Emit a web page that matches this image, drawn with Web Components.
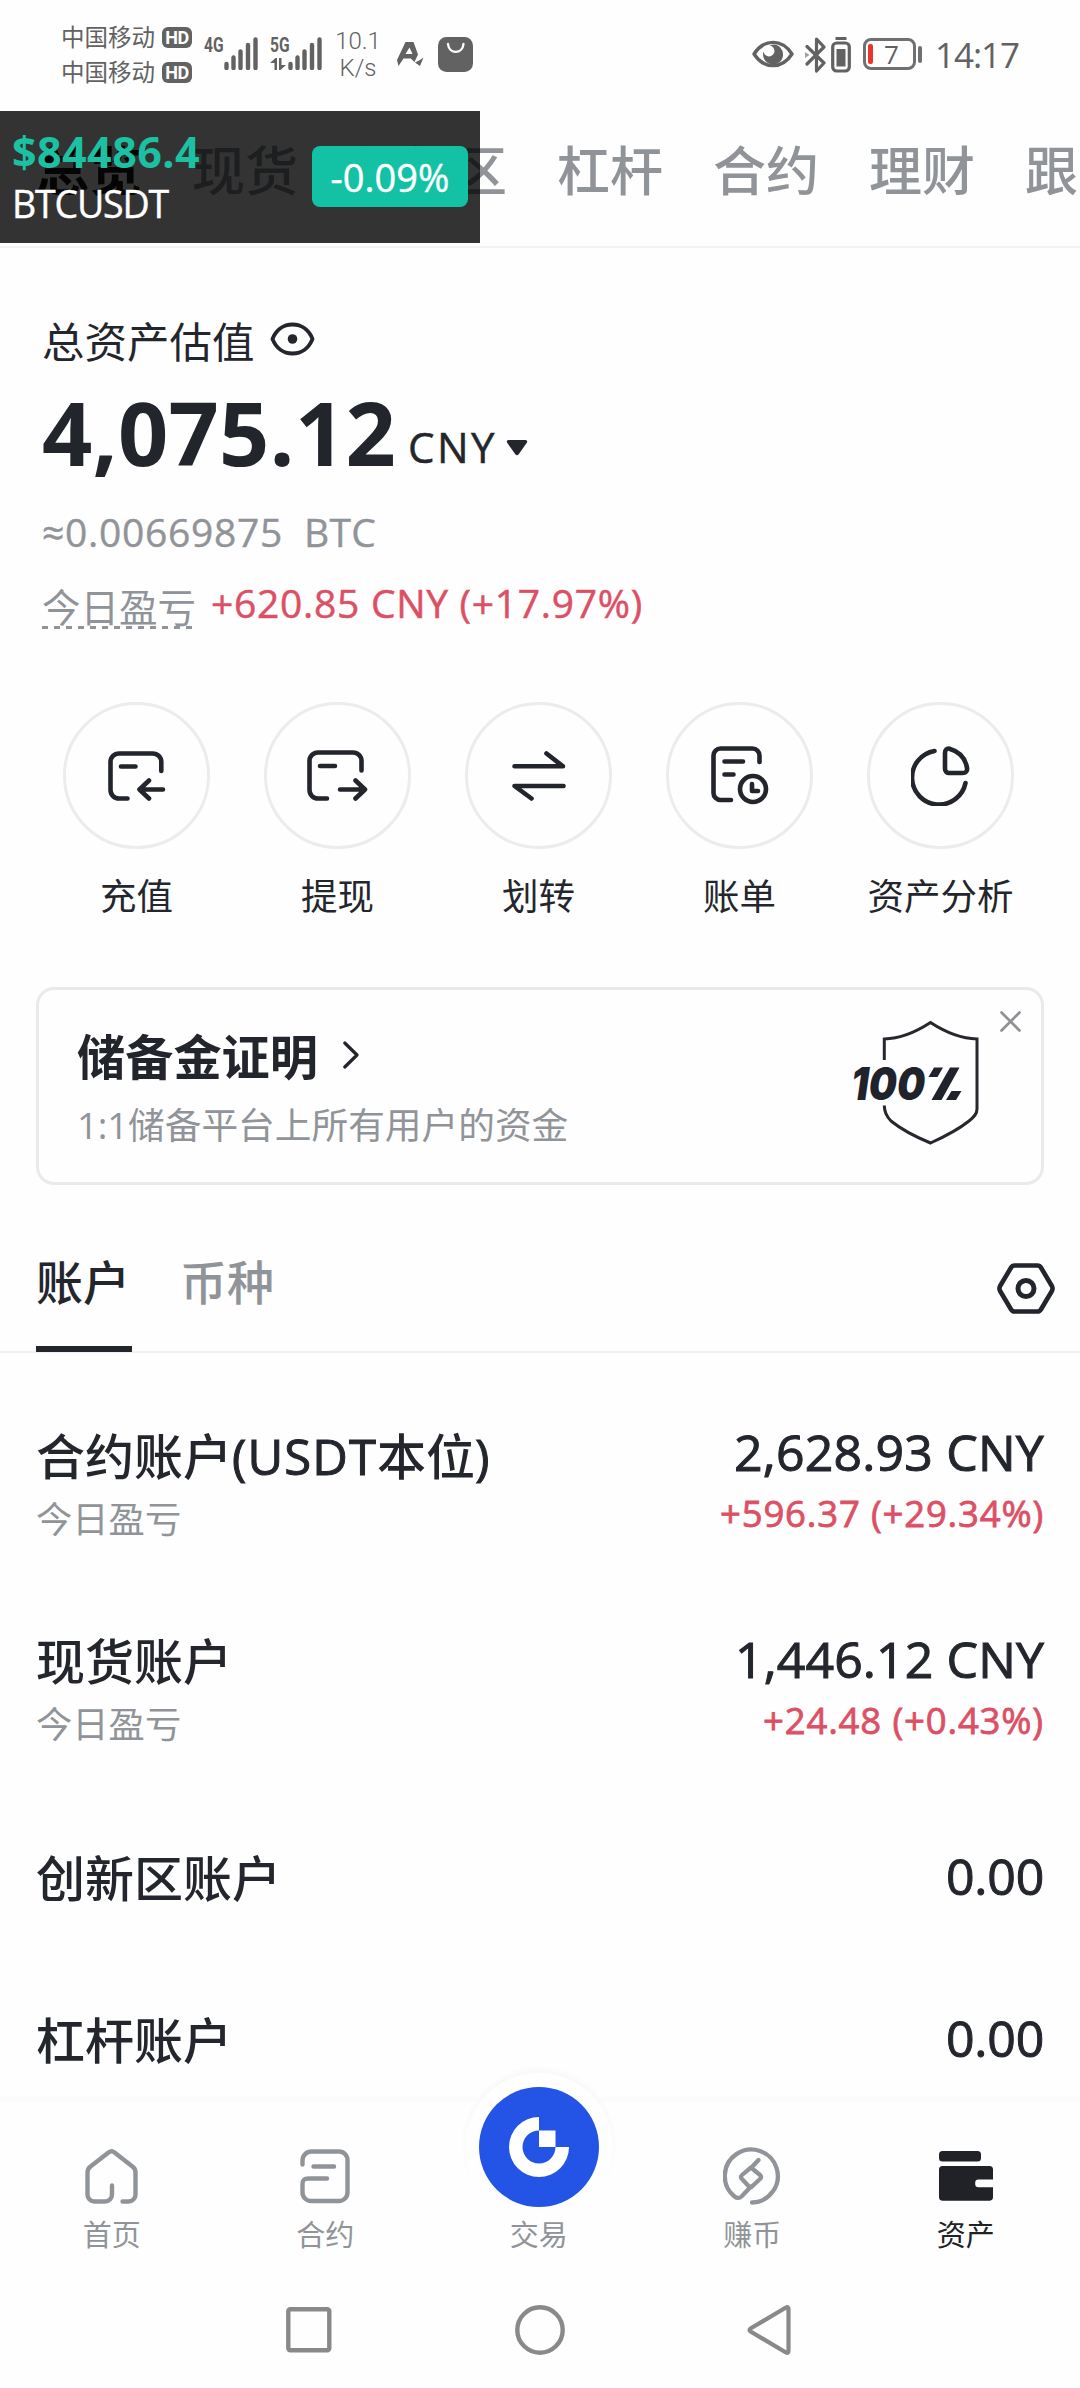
<!DOCTYPE html>
<html lang="zh-CN">
<head>
<meta charset="utf-8">
<title>资产</title>
<style>
html,body{margin:0;background:#fefefe}
body{width:1080px;height:2388px;overflow:hidden;font-family:Inter,"Noto Sans CJK SC",sans-serif;color:#24262d;--ink:#23252d;--muted:#909499;--rise:#dc5066;--line:#ebecee}
</style>
</head>
<body>
<wallet-app></wallet-app>
<script>
const define=(name,html,setup)=>customElements.define(name,class extends HTMLElement{
  connectedCallback(){
    if(this.shadowRoot)return;
    const t=document.createElement('template');
    t.innerHTML=typeof html==='function'?html(this):html;
    this.attachShadow({mode:'open'}).append(t.content.cloneNode(true));
    if(setup)setup(this);
  }
});

/* Icons: [width, height, markup] */
const S='fill="none" stroke="currentColor" stroke-linecap="round" stroke-linejoin="round"';
const bars='<path d="M2.5 31v-4M9.5 31V20.500M16.500 31V14.500M24 31V8M31.500 31V2.500" fill="none" stroke="currentColor" stroke-width="4.400" stroke-linecap="round"/>';
const ICONS={
 bars:[34,33,bars],
 updown:[16,12,'<path d="M0 5L5.500 0H7v12H4.500V5zM16 7l-5.500 5H9V0h2.500v7z" fill="currentColor"/>'],
 amark:[27,25,'<path d="M8.500 0h8L21 12.500l-3.500 7.500-3.800-3.500H6.500L1.500 24 0 18zM12.500 5.500L8.500 12h7zM26.500 15.500l-3.500 8.500-5-3.500 5-2.500z" fill="currentColor" fill-rule="evenodd"/>'],
 bag:[35,35,'<rect width="35" height="35" rx="8.500" fill="currentColor"/><path d="M10 7c1 10.500 14.500 10.500 15.500 0" fill="none" stroke="#fff" stroke-width="2.400" stroke-linecap="round"/>'],
 eyefill:[42,28,`<path d="M2 14C12-1.500 30-1.500 40 14C30 29.500 12 29.500 2 14z" ${S} stroke-width="3.400"/><path d="M21 4.500A10 10 0 1 1 11.500 11.500A5.500 5.500 0 1 0 17.500 5.500z" fill="currentColor"/>`],
 bt:[22,36,`<path d="M2 9.500L19 26l-7.500 8V2L19 10 2 27" ${S} stroke-width="3.200"/><path d="M0 15l4.500 3L0 21z" fill="currentColor" opacity=".6"/>`],
 minibat:[20,36,`<rect x="1.700" y="6" width="16.600" height="28" rx="4" ${S} stroke-width="3.200"/><path d="M4.500 1.500h11" stroke="currentColor" stroke-width="3"/><rect x="5.500" y="12" width="9" height="17.500" fill="currentColor"/>`],
 eye:[45,34,`<path d="M2.500 17C6 8 13.500 2.500 22.500 2.500S39 8 42.500 17C39 26 31.500 31.500 22.500 31.500S6 26 2.500 17z" ${S} stroke-width="3.800"/><circle cx="22.500" cy="17" r="4.800" fill="currentColor"/>`],
 caret:[22,16,'<path d="M2.500 0h17c1.500 0 2.300 1.500 1.300 2.800l-8.300 11.700c-.8 1-2.200 1-3 0L1.200 2.800C.2 1.500 1 0 2.500 0z" fill="currentColor"/>'],
 deposit:[58,50,`<path d="M53.300 20V11a8.500 8.500 0 0 0-8.500-8.500H11A8.500 8.500 0 0 0 2.500 11v28a8.500 8.500 0 0 0 8.500 8.500h8.500M13 15.500h14.500M55 38.500H32M41 29.500l-9.500 9 9.500 9" ${S} stroke-width="4.600"/>`],
 withdraw:[61,52,`<path d="M54.500 20.500V11A8.500 8.500 0 0 0 46 2.500H11A8.500 8.500 0 0 0 2.500 11v29a8.500 8.500 0 0 0 8.500 8.500h9M13 16h15M33 39.500h24.500M48.500 30.500l9.500 9-9.500 9" ${S} stroke-width="4.600"/>`],
 transfer:[54,50,`<path d="M2.500 15.300H51L34.500 2.500M51.500 35H2.500l17 12.500" ${S} stroke-width="4.600"/>`],
 bill:[58,59,`<path d="M48.500 16V9.500a7 7 0 0 0-7-7H9.500a7 7 0 0 0-7 7V47a7 7 0 0 0 7 7H20M13.500 15.500H32M13.500 28.500H22.500M41 38v7h6" ${S} stroke-width="4.600"/><circle cx="42" cy="43" r="13" ${S} stroke-width="4.600"/>`],
 pie:[59,60,`<path d="M23.500 5A27 27 0 1 0 54.500 37M34 7v16a4 4 0 0 0 4 4h13.500c3.500 0 5-2 4.500-5C54.500 12.500 48 5.500 38.500 2.700C36 2 34 4 34 7z" ${S} stroke-width="4.600"/>`],
 chevron:[16,28,`<path d="M1.800 2L14 14 1.800 26" ${S} stroke-width="3.200"/>`],
 close:[21,21,`<path d="M1.500 1.500l18 18M19.500 1.500l-18 18" ${S} stroke-width="2.700"/>`],
 hex:[58,51,`<path d="M17.500 2.500h23c1.600 0 2.600.7 3.400 2l11 18.500c.9 1.700.9 3.300 0 5l-11 18.500c-.8 1.300-1.800 2-3.400 2h-23c-1.600 0-2.600-.7-3.400-2L3.100 28c-.9-1.700-.9-3.300 0-5L14.100 4.500c.8-1.300 1.800-2 3.400-2z" ${S} stroke-width="4.600"/><circle cx="29" cy="25.500" r="8" ${S} stroke-width="5"/>`],
 home:[53,55,`<path d="M27 36.500V45a7 7 0 0 1-7 7.500H9.500A7 7 0 0 1 2.500 45V23.500c0-2.500.8-4.200 2.700-5.800L23.500 3.500c2-1.600 4-1.600 6 0L47.800 17.700c1.900 1.600 2.700 3.300 2.700 5.800V45a7 7 0 0 1-7 7.500H37.500" ${S} stroke-width="4.400"/>`],
 contract:[50,55,`<path d="M2.500 15.500V11.500a9 9 0 0 1 9-9H39a8.500 8.500 0 0 1 8.500 8.500V43.500A8.500 8.500 0 0 1 39 52H11A8.500 8.500 0 0 1 2.500 43.500V35.500C2.500 31 4 29.500 8.500 29.500H27M13.500 17.500H34" ${S} stroke-width="4.400"/>`],
 earn:[58,58,`<path d="M29 55.500A26.500 26.500 0 1 0 11.500 49.500C14 51.500 17 51.500 19 49L28 39.500M35.500 13L28 21M28 20.500L37 28C38.500 29.300 38.500 30.500 37 32L29 39.500C28 40.500 27 40.500 26 39.500L19 32C17.500 30.500 17.500 29.300 19 28z" ${S} stroke-width="4.300"/>`],
 wallet:[54,50,'<rect width="42" height="10.500" rx="3.500" fill="currentColor"/><path d="M3.500 15H50.500A3.500 3.500 0 0 1 54 18.500V28.500H39.500A3.300 3.300 0 0 0 36.200 31.800V33A3.300 3.300 0 0 0 39.500 36.300H54V46A3.800 3.800 0 0 1 50.200 49.800H3.800A3.800 3.800 0 0 1 0 46V18.500A3.500 3.500 0 0 1 3.500 15z" fill="currentColor"/>'],
 trade:[60,60,'<path d="M30 0A30 30 0 1 0 60 30H46.500A16.500 16.500 0 1 1 30 13.500zM30 13.500h16.500V30H30z" fill="#fff" fill-rule="nonzero"/>'],
 recent:[46,46,`<rect x="2.300" y="2.300" width="41" height="41" rx="2" ${S} stroke-width="4.400"/>`],
 circle:[50,50,`<circle cx="25" cy="25" r="22.700" ${S} stroke-width="4.400"/>`],
 back:[44,50,`<path d="M39 2.500L3.500 23.500C2.200 24.300 2.200 25.700 3.500 26.500L39 47.500C40.500 48.300 41.500 47.800 41.500 46V4C41.500 2.200 40.500 1.700 39 2.500z" ${S} stroke-width="4.200"/>`]
};
define('ui-icon',el=>{const [w,h,m]=ICONS[el.getAttribute('name')];
 return `<style>:host{display:block;flex:none;width:${w}px;height:${h}px}svg{display:block}</style><svg width="${w}" height="${h}" viewBox="0 0 ${w} ${h}">${m}</svg>`});

/* Text tracked to a given advance width */
define('fit-text',`<style>:host{display:inline-block;white-space:pre;flex:none;font-family:"Open Sans","Noto Sans CJK SC",sans-serif}</style><span><slot></slot></span>`,el=>{
  const n=[...el.textContent].length, target=+el.getAttribute('width');
  const w=el.shadowRoot.querySelector('span').getBoundingClientRect().width;
  el.style.letterSpacing=((target-w)/n).toFixed(3)+'px';
});

define('status-bar',`<style>
:host{display:flex;height:111px;box-sizing:border-box;padding:0 61px 0 61px;color:#626262;align-items:flex-start}
.carriers{display:flex;flex-direction:column;padding-top:20px}
.c{display:flex;align-items:center;gap:7px;height:35px;font-size:23.500px;line-height:35px}
.hd{width:30px;height:21px;border-radius:6px;background:#626262;color:#fff;font:700 18px/21px Roboto,sans-serif;text-align:center;letter-spacing:-.5px}
.sig{display:flex;margin-top:37px}
.g{font:700 20px/16px "Roboto",sans-serif;width:20px;display:flex;flex-direction:column;justify-content:space-between;height:33px}
.g span{display:block;transform:scaleX(.78);transform-origin:0 0;width:26px}
.rate{font:300 24px/27px Roboto,sans-serif;text-align:center;margin:28px 0 0 13px;width:46px}
.bat{box-sizing:border-box;width:53px;height:32px;border:3.500px solid #707070;border-radius:8px;display:flex;align-items:center;padding-left:2px;margin:38px 0 0 12px}
.bat i{width:5px;height:20px;border-radius:2px;background:#e8342a}
.bat b{font:400 26px/26px "Open Sans";margin-left:11px}
.tip{width:4px;height:17px;border-radius:2px;background:#707070;margin:46px 0 0 2px}
.time{font-size:35px;line-height:40px;margin:35px 0 0 13px}
</style>
<div class="carriers"><div class="c"><span>中国移动</span><span class="hd">HD</span></div><div class="c"><span>中国移动</span><span class="hd">HD</span></div></div>
<div class="sig" style="margin-left:12px"><div class="g"><span>4G</span></div><ui-icon name="bars"></ui-icon></div>
<div class="sig" style="margin-left:12px"><div class="g" style="width:18px"><span>5G</span><ui-icon name="updown"></ui-icon></div><ui-icon name="bars"></ui-icon></div>
<div class="rate">10.1<br>K/s</div>
<ui-icon name="amark" style="margin:42px 0 0 16px"></ui-icon>
<ui-icon name="bag" style="margin:37px 0 0 14px"></ui-icon>
<ui-icon name="eyefill" style="margin:40px 0 0 auto"></ui-icon>
<ui-icon name="bt" style="margin:37px 0 0 11px"></ui-icon>
<ui-icon name="minibat" style="margin:37px 0 0 4px"></ui-icon>
<div class="bat"><i></i><b>7</b></div><div class="tip"></div>
<fit-text class="time" width="84">14:17</fit-text>`);

define('top-tabs',`<style>
:host{display:flex;gap:50px;box-sizing:border-box;height:137px;padding:31px 0 0 36px;border-bottom:2px solid #f3f3f4;font-size:53px;line-height:60px;font-weight:500;color:var(--muted);overflow:hidden;white-space:nowrap}
b{font-weight:700;color:#17181c}span,b{flex:none}
</style><b>总览</b><span>现货</span><span>创新区</span><span>杠杆</span><span>合约</span><span>理财</span><span>跟</span>`);

/* Floating price widget that hovers over the app */
define('price-float',`<style>
:host{position:absolute;left:0;top:111px;width:480px;height:132px;box-sizing:border-box;background:rgba(0,0,0,.8);display:flex;justify-content:space-between;align-items:flex-start;padding:0 12px}
.l{display:flex;flex-direction:column;align-items:flex-start}
.p{font-size:43px;font-weight:700;line-height:54px;color:#1cc0a3;margin-top:14px}
.s{font-size:37.500px;line-height:44px;color:#fff;margin-top:3px;-webkit-text-stroke:.4px}
.b{width:156px;height:61px;margin-top:35px;border-radius:8px;background:#13c2a5;color:#fff;font-size:38px;line-height:62px;text-align:center;-webkit-text-stroke:.4px}
</style><div class="l"><fit-text class="p" width="188">$84486.4</fit-text><fit-text class="s" width="156">BTCUSDT</fit-text></div><div class="b"><fit-text width="119">-0.09%</fit-text></div>`);

define('asset-summary',`<style>
:host{display:block;padding:65px 0 0 42px}
.r{display:flex;height:60px;line-height:60px}
.t{font-size:42.500px;gap:15px}
.v{height:120px;line-height:120px;margin-top:-1px;align-items:baseline;font-size:42px}
.big{font-size:88px;font-weight:700;color:var(--ink)}
.btc{margin-top:10px;font-size:39px;color:var(--muted);-webkit-text-stroke:.4px}
.pnl{margin-top:12px;font-size:39px}
.d{color:var(--muted);font-size:38.500px;height:54px;line-height:69px;width:150px;white-space:nowrap;padding-bottom:1px;background:repeating-linear-gradient(90deg,#909499 0 6px,transparent 6px 12px) 0 100%/100% 3px no-repeat}
.up{color:var(--rise);margin-left:19px;line-height:58px;-webkit-text-stroke:.5px}
</style>
<div class="r t"><span>总资产估值</span><ui-icon name="eye" style="margin-top:9px"></ui-icon></div>
<div class="r v"><fit-text class="big" width="354">4,075.12</fit-text><fit-text width="89" style="margin-left:12px;transform:translateY(-3px);-webkit-text-stroke:.5px">CNY</fit-text><ui-icon name="caret" style="align-self:flex-start;margin:68px 0 0 9px"></ui-icon></div>
<div class="r btc"><fit-text width="241">≈0.00669875</fit-text><fit-text width="72" style="margin-left:21px">BTC</fit-text></div>
<div class="r pnl"><span class="d">今日盈亏</span><fit-text class="up" width="432">+620.85 CNY (+17.97%)</fit-text></div>`);

define('round-action',el=>`<style>
:host{display:flex;flex-direction:column;align-items:center;gap:24px;width:201px}
.c{box-sizing:border-box;width:147px;height:147px;border-radius:50%;border:3px solid var(--line);display:flex;align-items:center;justify-content:center;color:var(--ink)}
.l{font-size:36.500px;line-height:48px;white-space:nowrap}
</style><div class="c"><ui-icon name="${el.getAttribute('icon')}"></ui-icon></div><div class="l"><slot></slot></div>`);
define('action-row',`<style>:host{display:flex;padding:68px 0 0 36px}</style>
<round-action icon="deposit">充值</round-action><round-action icon="withdraw">提现</round-action><round-action icon="transfer">划转</round-action><round-action icon="bill">账单</round-action><round-action icon="pie">资产分析</round-action>`);

define('reserve-card',`<style>
:host{display:flex;box-sizing:border-box;width:1008px;height:198px;margin:66px 0 0 36px;border:3px solid #e9eaea;border-radius:18px;padding:36px 20px 0 38px;align-items:flex-start}
.l{flex:1}
.t{display:flex;gap:27px;align-items:center;font-size:48.200px;font-weight:700;line-height:60px;color:var(--ink);margin-top:2px}
.s{font-size:36.700px;line-height:44px;color:var(--muted);margin-top:15px}
svg{display:block;margin:-7px 19px 0 0}
text{font:italic 900 45px Inter,sans-serif;fill:#20222c}
</style><div class="l"><div class="t"><span>储备金证明</span><ui-icon name="chevron" style="margin:-7px 0 0 -2px"></ui-icon></div><div class="s"><fit-text width="51">1:1</fit-text>储备平台上所有用户的资金</div></div>
<svg width="130" height="130" viewBox="852 1019 130 130"><path d="M885.300 1060V1039C902 1038.500 917 1032 931.500 1022.500C946 1032 961 1038.500 978 1039V1109C978 1114 975 1117 970 1121C960 1129 947 1136 931.500 1143C917 1137 903 1130 892 1121C887 1116 885.300 1112 885.300 1105.500" fill="none" stroke="#26282d" stroke-width="3"/><text x="852" y="1100" textLength="74" lengthAdjust="spacingAndGlyphs">100</text><path d="M935 1067.500h9l-5.500 9.500h-9zM951 1067.500h9.500L942.500 1100h-10zM952.500 1091h10l-5.500 9h-10z" fill="#20222c"/></svg>
<ui-icon name="close" style="color:#8f9194;margin-top:-15px"></ui-icon>`);

define('account-tabs',`<style>
:host{display:flex;box-sizing:border-box;height:168px;padding:0 25px 0 36px;border-bottom:2px solid #f1f1f2;align-items:flex-start;font-size:47px;line-height:60px;font-weight:500}
div{box-sizing:border-box;height:167px;width:96px;padding-top:68px;white-space:nowrap}
.on{border-bottom:6px solid #23252d}
.off{color:var(--muted);margin-left:48px;flex:1}
</style><div class="on">账户</div><div class="off">币种</div><ui-icon name="hex" style="margin-top:78px;color:var(--ink)"></ui-icon>`);

define('account-row',el=>{const a=n=>el.getAttribute(n);return `<style>
:host{display:flex;justify-content:space-between;padding:0 36px;height:${a('h')}px;box-sizing:border-box}
.l{padding-top:4px}.r{display:flex;flex-direction:column;align-items:flex-end}
.n{font-size:49px;line-height:60px;font-weight:500;white-space:nowrap}
.n ::slotted(fit-text){-webkit-text-stroke:1px}
.v{font-size:50px;line-height:60px;font-weight:500;-webkit-text-stroke:1px}
.s{font-size:36.300px;line-height:44px;margin-top:10px;color:var(--muted)}
.p{font-size:36.500px;line-height:44px;margin-top:9px;color:var(--rise);font-weight:500;-webkit-text-stroke:.8px}
</style><div class="l"><div class="n"><slot></slot></div>${a('pnl')?'<div class="s">今日盈亏</div>':''}</div>
<div class="r"><fit-text class="v" width="${a('vw')}">${a('value')}</fit-text>${a('pnl')?`<fit-text class="p" width="${a('pw')}">${a('pnl')}</fit-text>`:''}</div>`});
define('account-list',`<style>:host{display:block;padding-top:69px}</style>
<account-row h="207" value="2,628.93 CNY" vw="310" pnl="+596.37 (+29.34%)" pw="324">合约账户<fit-text width="145">(USDT</fit-text>本位<fit-text width="16">)</fit-text></account-row>
<account-row h="217" value="1,446.12 CNY" vw="309" pnl="+24.48 (+0.43%)" pw="281">现货账户</account-row>
<account-row h="162" value="0.00" vw="98">创新区账户</account-row>
<account-row h="60" value="0.00" vw="98">杠杆账户</account-row>`);

define('nav-item',el=>`<style>
:host{display:flex;flex-direction:column;align-items:center;width:213.500px;color:var(--muted)}
:host([active]){color:#202228}
.i{height:120px;display:flex;align-items:center;justify-content:center;padding-top:30px;box-sizing:border-box}
:host([main]) .i{width:120px;height:120px;border-radius:50%;background:#2354e6;margin-top:-14px;padding:0;box-shadow:0 0 0 14px #fefefe,0 -4px 4px 15px #f9f9fa;margin-bottom:14px}
.l{font-size:29px;line-height:40px;margin-top:-5px;white-space:nowrap;position:relative}
</style><div class="i"><ui-icon name="${el.getAttribute('icon')}"></ui-icon></div><div class="l"><slot></slot></div>`);
define('bottom-nav',`<style>
:host{display:flex;box-sizing:border-box;height:165px;padding-left:5px;background:#fefefe;box-shadow:0 -2px 5px #f8f8f9}
</style><nav-item icon="home">首页</nav-item><nav-item icon="contract">合约</nav-item><nav-item icon="trade" main>交易</nav-item><nav-item icon="earn">赚币</nav-item><nav-item icon="wallet" active>资产</nav-item>`);
define('system-nav',`<style>:host{display:flex;height:122px;align-items:center;gap:182.500px;color:#898989;box-sizing:border-box;padding:6px 0 0 286px;background:#fefefe}</style>
<ui-icon name="recent"></ui-icon><ui-icon name="circle"></ui-icon><ui-icon name="back"></ui-icon>`);

define('wallet-app',`<style>:host{display:flex;flex-direction:column;height:2388px;position:relative}main{height:2101px;overflow:hidden;flex:none}bottom-nav{flex:none}</style>
<main><status-bar></status-bar><top-tabs></top-tabs><asset-summary></asset-summary><action-row></action-row><reserve-card></reserve-card><account-tabs></account-tabs><account-list></account-list></main>
<bottom-nav></bottom-nav><system-nav></system-nav><price-float></price-float>`);
</script>
</body>
</html>
